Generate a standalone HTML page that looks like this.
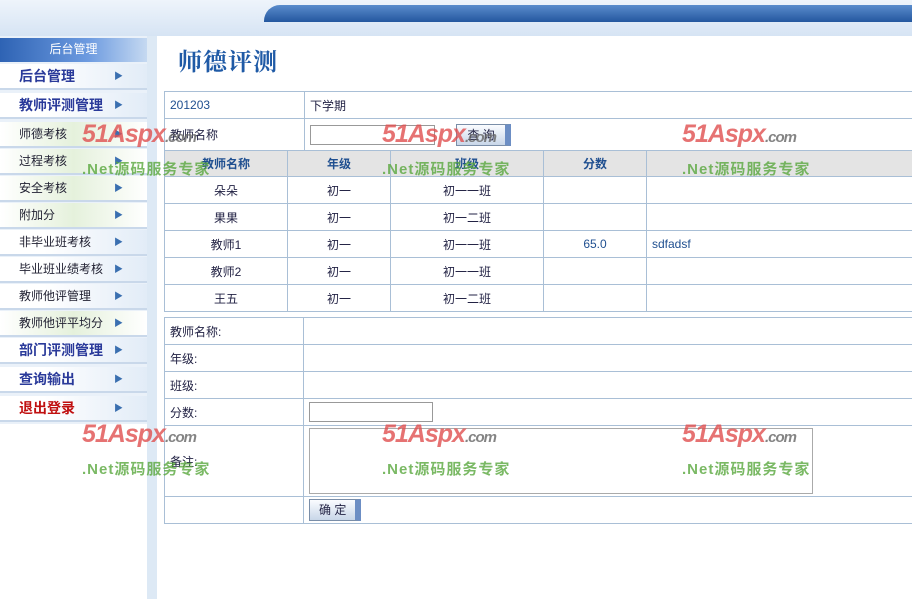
<!DOCTYPE html><html><head><meta charset="utf-8"><style>
*{margin:0;padding:0;box-sizing:border-box}
body{width:912px;height:599px;overflow:hidden;background:#fff;font-family:"Liberation Sans","Noto Sans CJK SC",sans-serif;font-size:12px;position:relative}
.a{position:absolute}
#top{left:0;top:0;width:912px;height:36px;background:linear-gradient(#eef4fb,#d6e4f4)}
#bar{left:264px;top:5px;width:660px;height:17px;background:linear-gradient(#5a8ccc,#24579f);border-radius:16px 0 0 0}
#strip{left:147px;top:36px;width:10px;height:563px;background:#dde9f5}
#side{left:0;top:36px;width:147px;height:388px;background:#eaf1f9}
#st{left:0;top:38px;width:147px;height:24px;background:linear-gradient(90deg,#2e63b4,#6d9be0 60%,#c5d9f1);color:#fff;text-align:center;line-height:22px;font-size:12px}
.m{position:absolute;left:0;width:147px;height:26px;background:linear-gradient(90deg,#fff 30%,#e2ecf7);border-bottom:2px solid #c9d8ea;line-height:24px;padding-left:19px;color:#223;font-size:12px}
.m.g{background:linear-gradient(90deg,#fff,#e5f1dc 50%,#fff)}
.m.b{font-size:14px;font-weight:bold;color:#2a3a9a}
.m::after{content:"▶";position:absolute;left:114px;top:0;font-size:9px;color:#3a6fb0}
h1{position:absolute;left:178px;top:42px;font-size:24px;color:#1f5aa6;font-weight:bold;font-family:"Noto Serif CJK SC",serif;letter-spacing:1px}
table{position:absolute;border-collapse:collapse;table-layout:fixed}
td{border:1px solid #a9bfd6;height:27px;padding:0 5px;color:#224;font-size:12px}
.c td{text-align:center}
.hd td{background:#e4e4e4;font-weight:bold;color:#1f4f90;text-align:center;height:26px}
.inp{border:1px solid #999;height:20px;background:#fff;display:inline-block}
.btn{display:inline-block;border:1px solid #7a8ea8;background:linear-gradient(#fafcff,#c8d6e8);height:22px;line-height:20px;padding:0 10px;border-right:6px solid #6c8ec4}
.w1{color:#e05050;font-size:25px;font-weight:bold;font-style:italic;opacity:.8;letter-spacing:-1px}
.w2{color:#5aa83e;font-size:15px;font-weight:bold;opacity:.8;letter-spacing:1px}
</style></head><body>
<div class="a" id="top"></div><div class="a" id="bar"></div>
<div class="a" id="strip"></div><div class="a" id="side"></div>
<div class="a" id="st">后台管理</div>
<div class="m b" style="top:64px">后台管理</div>
<div class="m b" style="top:93px">教师评测管理</div>
<div class="m g" style="top:122px">师德考核</div>
<div class="m g" style="top:149px">过程考核</div>
<div class="m g" style="top:176px">安全考核</div>
<div class="m g" style="top:203px">附加分</div>
<div class="m" style="top:230px">非毕业班考核</div>
<div class="m" style="top:257px">毕业班业绩考核</div>
<div class="m" style="top:284px">教师他评管理</div>
<div class="m g" style="top:311px">教师他评平均分</div>
<div class="m b" style="top:338px">部门评测管理</div>
<div class="m b" style="top:367px">查询输出</div>
<div class="m b" style="top:396px;color:#c01010">退出登录</div>
<h1>师德评测</h1>
<table style="left:164px;top:91px;width:760px">
<colgroup><col style="width:140px"><col></colgroup>
<tr><td style="color:#1f4f90">201203</td><td>下学期</td></tr>
<tr><td style="height:32px">教师名称</td><td><span class="inp" style="width:125px;vertical-align:middle"></span> <span class="btn" style="margin-left:18px">查 询</span></td></tr>
</table>
<table class="c" style="left:164px;top:150px;width:760px">
<colgroup><col style="width:123px"><col style="width:103px"><col style="width:153px"><col style="width:103px"><col></colgroup>
<tr class="hd"><td>教师名称</td><td>年级</td><td>班级</td><td>分数</td><td></td></tr>
<tr><td>朵朵</td><td>初一</td><td>初一一班</td><td></td><td></td></tr>
<tr><td>果果</td><td>初一</td><td>初一二班</td><td></td><td></td></tr>
<tr><td>教师1</td><td>初一</td><td>初一一班</td><td style="color:#1f4f90">65.0</td><td style="text-align:left;color:#1f4f90">sdfadsf</td></tr>
<tr><td>教师2</td><td>初一</td><td>初一一班</td><td></td><td></td></tr>
<tr><td>王五</td><td>初一</td><td>初一二班</td><td></td><td></td></tr>
</table>
<table style="left:164px;top:317px;width:760px">
<colgroup><col style="width:139px"><col></colgroup>
<tr><td>教师名称:</td><td></td></tr>
<tr><td>年级:</td><td></td></tr>
<tr><td>班级:</td><td></td></tr>
<tr><td>分数:</td><td><span class="inp" style="width:124px;vertical-align:middle"></span></td></tr>
<tr><td style="height:71px">备注:</td><td><span class="inp" style="width:504px;height:66px;vertical-align:middle;border-color:#aaa"></span></td></tr>
<tr><td></td><td><span class="btn" style="padding:0 9px">确 定</span></td></tr>
</table>
<div class="a w1" style="left:82px;top:120px">51Aspx<span style="font-size:15px;color:#666">.com</span></div>
<div class="a w2" style="left:82px;top:158px">.Net源码服务专家</div>
<div class="a w1" style="left:382px;top:120px">51Aspx<span style="font-size:15px;color:#666">.com</span></div>
<div class="a w2" style="left:382px;top:158px">.Net源码服务专家</div>
<div class="a w1" style="left:682px;top:120px">51Aspx<span style="font-size:15px;color:#666">.com</span></div>
<div class="a w2" style="left:682px;top:158px">.Net源码服务专家</div>
<div class="a w1" style="left:82px;top:420px">51Aspx<span style="font-size:15px;color:#666">.com</span></div>
<div class="a w2" style="left:82px;top:458px">.Net源码服务专家</div>
<div class="a w1" style="left:382px;top:420px">51Aspx<span style="font-size:15px;color:#666">.com</span></div>
<div class="a w2" style="left:382px;top:458px">.Net源码服务专家</div>
<div class="a w1" style="left:682px;top:420px">51Aspx<span style="font-size:15px;color:#666">.com</span></div>
<div class="a w2" style="left:682px;top:458px">.Net源码服务专家</div>
</body></html>
